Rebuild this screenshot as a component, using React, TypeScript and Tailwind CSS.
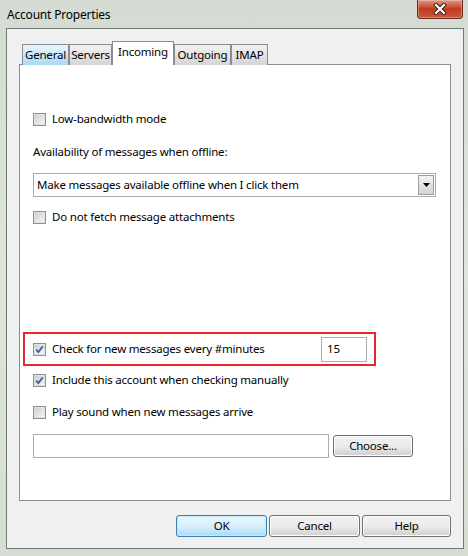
import React from "react";

const FONT = {
  fontFamily: '"Noto Sans", "Open Sans", Arial, sans-serif',
  fontSize: "11.5px",
  letterSpacing: "-0.2px",
};

function CheckBox({ checked }: { checked?: boolean }) {
  return (
    <span className="flex h-[13px] w-[13px] shrink-0 items-center justify-center border border-[#8e8f8f] bg-[#f4f4f4]">
      <span className="flex h-[11px] w-[11px] items-center justify-center border border-[#e2e2e2] bg-gradient-to-br from-[#cbcfd5] to-[#f6f6f6]">
        {checked && (
          <svg width="9" height="9" viewBox="0 0 9 9">
            <path d="M1.2 4.6 L3.4 7 L7.8 1.4" fill="none" stroke="#4a5f97" strokeWidth="1.8" />
          </svg>
        )}
      </span>
    </span>
  );
}

function CheckRow({ label, checked }: { label: string; checked?: boolean }) {
  return (
    <div className="flex h-[16px] items-center gap-[6px]">
      <CheckBox checked={checked} />
      <span className="leading-[16px] text-black">{label}</span>
    </div>
  );
}

function WinButton({ label, width, primary }: { label: string; width: string; primary?: boolean }) {
  return (
    <button
      type="button"
      className={`flex h-[22px] items-center justify-center rounded-[3px] border text-black ${width} ${
        primary
          ? "border-[#3c7fb1] bg-gradient-to-b from-[#eaf6fd] via-[#d9f0fc] to-[#a7d9f5] shadow-[inset_0_0_0_1px_#c8e8f8]"
          : "border-[#707070] bg-gradient-to-b from-[#f2f2f2] via-[#ebebeb] to-[#cfcfcf] shadow-[inset_0_0_0_1px_#fcfcfc]"
      }`}
    >
      {label}
    </button>
  );
}

const tabs = [
  { name: "General", w: "w-[47px]", hover: true },
  { name: "Servers", w: "w-[43px]" },
  { name: "Incoming", w: "w-[62px]", active: true },
  { name: "Outgoing", w: "w-[57px]" },
  { name: "IMAP", w: "w-[37px]" },
];

export default function App() {
  return (
    <div
      className="h-[556px] w-[468px] overflow-hidden bg-gradient-to-b from-[#d3dbd2] via-[#dfe5dd] to-[#d6ddd3]"
      style={FONT}
    >
      {/* title bar */}
      <div className="flex h-[28px] items-start justify-between">
        <span className="pl-[7px] pt-[7px] text-[12px] leading-[16px] text-black">Account Properties</span>
        <div className="mr-[5px] flex h-[19px] w-[46px] items-center justify-center rounded-b-[4px] border border-t-0 border-[#6b2a1e] bg-gradient-to-b from-[#dd9482] via-[#c13a22] to-[#c9583a] shadow-[inset_0_0_0_1px_rgba(255,255,255,0.3)]">
          <svg width="14" height="12" viewBox="0 0 14 12">
            <path d="M3 2 L11 10 M11 2 L3 10" stroke="#3a1a12" strokeWidth="4" strokeLinecap="square" />
            <path d="M3 2 L11 10 M11 2 L3 10" stroke="#ffffff" strokeWidth="2.2" strokeLinecap="square" />
          </svg>
        </div>
      </div>

      {/* client area */}
      <div className="ml-[6px] mr-[4px] h-[521px] border border-[#6f7b70] bg-[#f0f0f0] px-[12px]">
        {/* tabs */}
        <div className="relative z-10 -mb-px ml-[3px] mt-[12px] flex h-[24px] items-end">
          {tabs.map((t) =>
            t.active ? (
              <div
                key={t.name}
                className={`flex h-[24px] items-start justify-center border border-b-0 border-[#898c95] bg-white pt-[2px] leading-[16px] ${t.w}`}
              >
                {t.name}
              </div>
            ) : (
              <div
                key={t.name}
                className={`flex h-[21px] items-center justify-center border border-b-0 border-[#898c95] leading-[16px] ${t.w} ${
                  t.hover
                    ? "bg-gradient-to-b from-[#eaf6fd] to-[#a7d9f5]"
                    : "bg-gradient-to-b from-[#f2f2f2] to-[#d5d5d5]"
                }`}
              >
                {t.name}
              </div>
            )
          )}
        </div>

        {/* panel */}
        <div className="flex h-[437px] flex-col border border-[#898c95] bg-white pl-[13px]">
          <div className="mt-[46px]">
            <CheckRow label="Low-bandwidth mode" />
          </div>
          <div className="mt-[17px] h-[16px] leading-[16px]">Availability of messages when offline:</div>
          <div className="mt-[13px] flex h-[24px] w-[403px] items-center border border-[#abadb3] bg-white">
            <span className="flex-1 pl-[3px] leading-[16px]">
              Make messages available offline when I click them
            </span>
            <span className="mr-[1px] flex h-[20px] w-[16px] items-center justify-center border border-[#9c9c9c] bg-gradient-to-b from-[#f2f2f2] to-[#d4d4d4]">
              <svg width="7" height="4" viewBox="0 0 7 4">
                <path d="M0 0 H7 L3.5 4 Z" fill="#000" />
              </svg>
            </span>
          </div>
          <div className="mt-[12px]">
            <CheckRow label="Do not fetch message attachments" />
          </div>

          <div className="-ml-[10px] mt-[107px] flex h-[34px] w-[353px] items-center border-2 border-[#e8262b] pl-[8px] pr-[7px]">
            <CheckRow label="Check for new messages every #minutes" checked />
            <div className="ml-auto flex h-[25px] w-[46px] items-center border border-[#abadb3] bg-white pl-[5px]">
              15
            </div>
          </div>

          <div className="mt-[6px]">
            <CheckRow label="Include this account when checking manually" checked />
          </div>
          <div className="mt-[16px]">
            <CheckRow label="Play sound when new messages arrive" />
          </div>
          <div className="mt-[14px] flex items-center gap-[4px]">
            <div className="h-[24px] w-[296px] border border-[#abadb3] bg-white" />
            <WinButton label="Choose..." width="w-[80px]" />
          </div>
        </div>

        {/* dialog buttons */}
        <div className="mt-[14px] flex justify-end gap-[2px]">
          <WinButton label="OK" width="w-[91px]" primary />
          <WinButton label="Cancel" width="w-[91px]" />
          <WinButton label="Help" width="w-[89px]" />
        </div>
      </div>
    </div>
  );
}
